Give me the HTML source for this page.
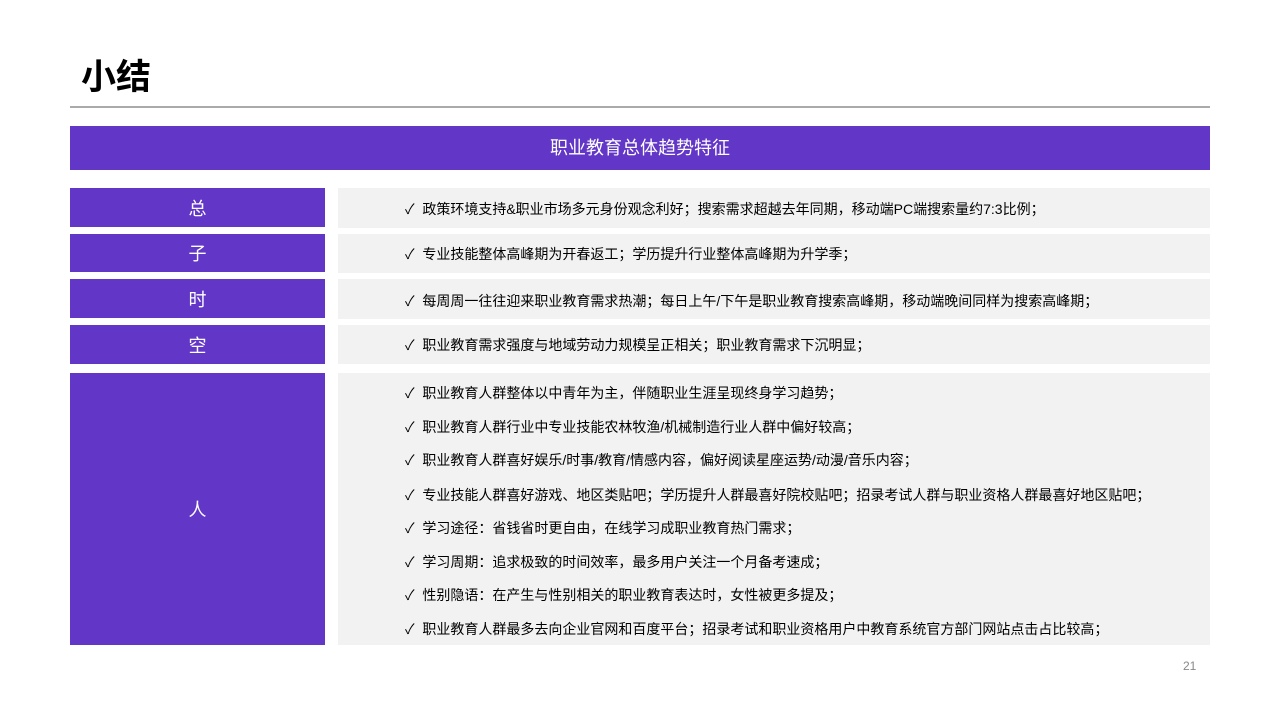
<!DOCTYPE html>
<html><head><meta charset="utf-8"><style>
body{margin:0;width:1280px;height:720px;background:#fff;position:relative;overflow:hidden;font-family:"Liberation Sans","Noto Sans CJK SC",sans-serif;}
.a{position:absolute}
.t{left:81px;top:55px;font-size:35px;font-weight:bold;color:#000;line-height:45px}
.ln{left:70px;top:106px;width:1140px;height:2px;background:#aaa}
.hd{left:70px;top:126px;width:1140px;height:44px;background:#6236c6;color:#fff;font-size:18px;line-height:44px;text-align:center}
.l{left:70px;width:255px;background:#6236c6;color:#fff;font-size:18px;display:flex;align-items:center;justify-content:center}
.r{left:338px;width:872px;background:#f2f2f2;color:#000;font-size:14px}
.r div{position:absolute;left:67px;white-space:nowrap}
.pn{left:1183px;top:659px;font-size:12px;color:#888}
</style></head><body>
<div class="a t">小结</div>
<div class="a ln"></div>
<div class="a hd">职业教育总体趋势特征</div>
<div class="a l" style="top:188px;height:39px">总</div>
<div class="a r" style="top:188px;height:40px"><div style="top:11px">✓&nbsp; 政策环境支持&amp;职业市场多元身份观念利好；搜索需求超越去年同期，移动端PC端搜索量约7:3比例；</div></div>
<div class="a l" style="top:234px;height:38px">子</div>
<div class="a r" style="top:234px;height:39px"><div style="top:10px">✓&nbsp; 专业技能整体高峰期为开春返工；学历提升行业整体高峰期为升学季；</div></div>
<div class="a l" style="top:279px;height:39px">时</div>
<div class="a r" style="top:279px;height:40px"><div style="top:12px">✓&nbsp; 每周周一往往迎来职业教育需求热潮；每日上午/下午是职业教育搜索高峰期，移动端晚间同样为搜索高峰期；</div></div>
<div class="a l" style="top:325px;height:39px">空</div>
<div class="a r" style="top:325px;height:39px"><div style="top:10px">✓&nbsp; 职业教育需求强度与地域劳动力规模呈正相关；职业教育需求下沉明显；</div></div>
<div class="a l" style="top:373px;height:272px">人</div>
<div class="a r" style="top:373px;height:272px">
<div style="top:10px">✓&nbsp; 职业教育人群整体以中青年为主，伴随职业生涯呈现终身学习趋势；</div>
<div style="top:44px">✓&nbsp; 职业教育人群行业中专业技能农林牧渔/机械制造行业人群中偏好较高；</div>
<div style="top:77px">✓&nbsp; 职业教育人群喜好娱乐/时事/教育/情感内容，偏好阅读星座运势/动漫/音乐内容；</div>
<div style="top:112px">✓&nbsp; 专业技能人群喜好游戏、地区类贴吧；学历提升人群最喜好院校贴吧；招录考试人群与职业资格人群最喜好地区贴吧；</div>
<div style="top:145px">✓&nbsp; 学习途径：省钱省时更自由，在线学习成职业教育热门需求；</div>
<div style="top:179px">✓&nbsp; 学习周期：追求极致的时间效率，最多用户关注一个月备考速成；</div>
<div style="top:212px">✓&nbsp; 性别隐语：在产生与性别相关的职业教育表达时，女性被更多提及；</div>
<div style="top:246px">✓&nbsp; 职业教育人群最多去向企业官网和百度平台；招录考试和职业资格用户中教育系统官方部门网站点击占比较高；</div>
</div>
<div class="a pn">21</div>
</body></html>
